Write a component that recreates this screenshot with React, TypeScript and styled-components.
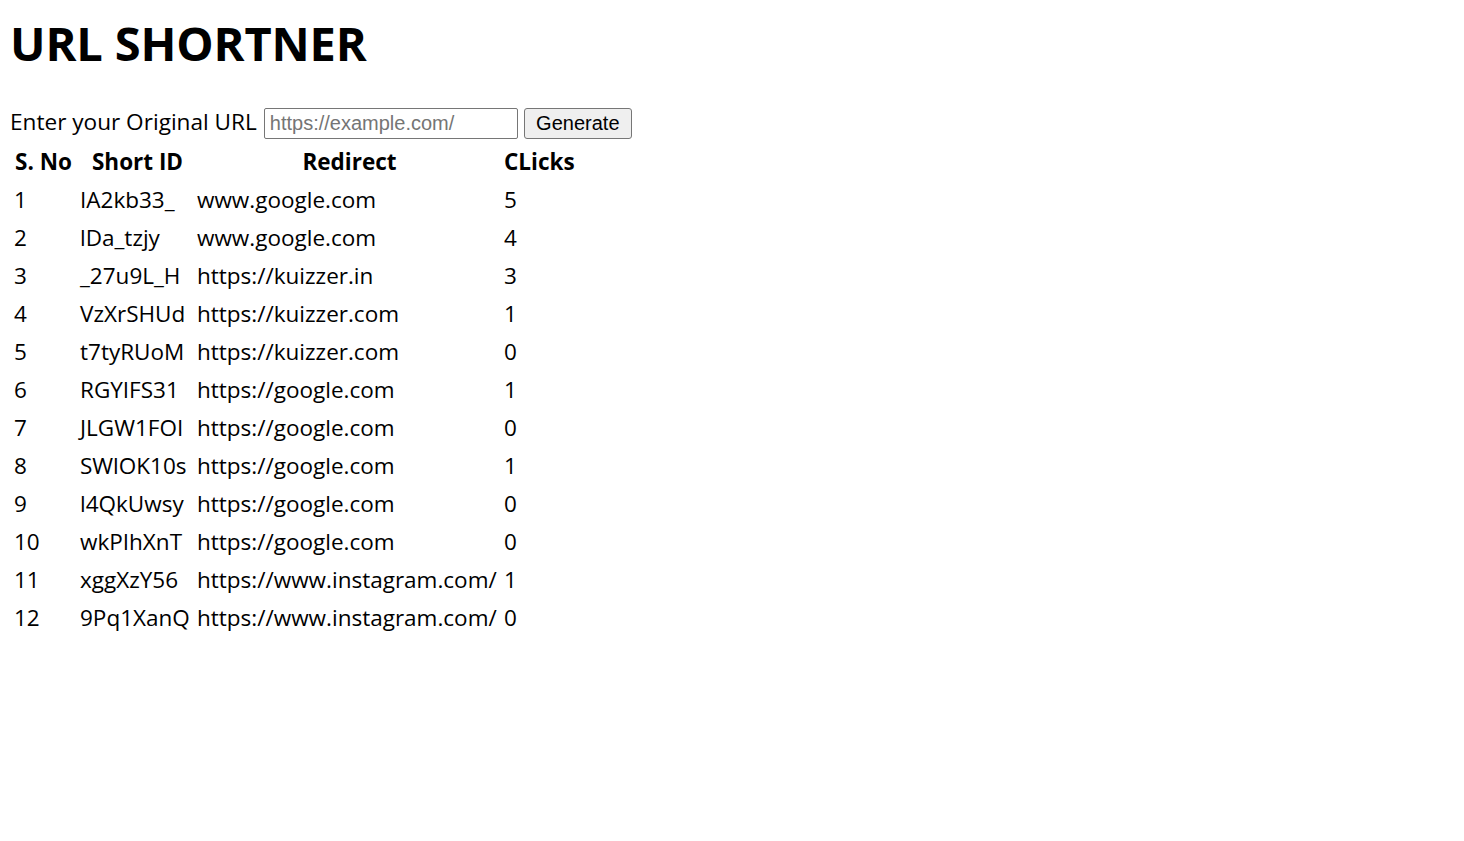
import React from "react";
import styled, { createGlobalStyle } from "styled-components";

const Global = createGlobalStyle`
  html, body { margin: 0; padding: 0; background: #fff; }
  body { font-family: "Open Sans", "Noto Sans", sans-serif; color: #000; }
`;

const Page = styled.div`
  padding: 0 8px;
`;

const Title = styled.h1`
  margin: 0;
  padding-left: 2px;
  font-size: 47px;
  font-weight: 700;
  line-height: 86px;
  height: 86px;
  letter-spacing: -0.15px;
`;

const FormRow = styled.div`
  display: flex;
  align-items: center;
  padding: 22px 0 0 2px;
  height: 31px;
`;

const Label = styled.label`
  font-size: 22.6px;
  margin-right: 7px;
  line-height: 27px;
  padding-bottom: 4px;
`;

const UrlInput = styled.input`
  box-sizing: border-box;
  width: 254px;
  height: 31px;
  border: 1px solid #767676;
  border-radius: 2px;
  padding: 0 5px;
  font-family: "Liberation Sans", Arial, sans-serif;
  font-size: 20px;
  color: #000;
  &::placeholder { color: #757575; }
`;

const Button = styled.button`
  box-sizing: border-box;
  margin-left: 6px;
  width: 108px;
  height: 31px;
  border: 1px solid #767676;
  border-radius: 3px;
  background: #efefef;
  font-family: "Liberation Sans", Arial, sans-serif;
  font-size: 20px;
  color: #000;
  padding: 0;
`;

const Table = styled.table`
  margin: 3px 0 0 0;
  border-collapse: collapse;
  border-spacing: 0;
  table-layout: fixed;
  font-size: 22.5px;
`;

const HeadCell = styled.th<{ $w: number }>`
  width: ${(p) => p.$w}px;
  height: 38px;
  padding: 0 1px;
  font-weight: 700;
  text-align: center;
  white-space: nowrap;
  vertical-align: middle;
`;

const Cell = styled.td<{ $first?: boolean }>`
  height: 38px;
  padding: 0 1px 0 ${(p) => (p.$first ? 6 : 1)}px;
  text-align: left;
  white-space: nowrap;
  vertical-align: middle;
`;

const rows: [string, string, number][] = [
  ["IA2kb33_", "www.google.com", 5],
  ["lDa_tzjy", "www.google.com", 4],
  ["_27u9L_H", "https://kuizzer.in", 3],
  ["VzXrSHUd", "https://kuizzer.com", 1],
  ["t7tyRUoM", "https://kuizzer.com", 0],
  ["RGYIFS31", "https://google.com", 1],
  ["JLGW1FOI", "https://google.com", 0],
  ["SWlOK10s", "https://google.com", 1],
  ["l4QkUwsy", "https://google.com", 0],
  ["wkPIhXnT", "https://google.com", 0],
  ["xggXzY56", "https://www.instagram.com/", 1],
  ["9Pq1XanQ", "https://www.instagram.com/", 0],
];

export default function App() {
  return (
    <Page>
      <Global />
      <Title>URL SHORTNER</Title>
      <FormRow>
        <Label htmlFor="url">Enter your Original URL</Label>
        <UrlInput id="url" type="text" placeholder="https://example.com/" />
        <Button type="button">Generate</Button>
      </FormRow>
      <Table>
        <thead>
          <tr>
            <HeadCell $w={69}>S. No</HeadCell>
            <HeadCell $w={115}>Short ID</HeadCell>
            <HeadCell $w={305}>Redirect</HeadCell>
            <HeadCell $w={68}>CLicks</HeadCell>
          </tr>
        </thead>
        <tbody>
          {rows.map(([id, url, clicks], i) => (
            <tr key={id}>
              <Cell $first>{i + 1}</Cell>
              <Cell>{id}</Cell>
              <Cell>{url}</Cell>
              <Cell>{clicks}</Cell>
            </tr>
          ))}
        </tbody>
      </Table>
    </Page>
  );
}
